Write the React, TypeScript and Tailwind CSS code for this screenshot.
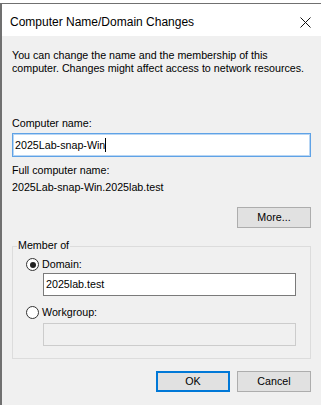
import React from 'react';

const Radio = ({ checked, label }: { checked?: boolean; label: string }) => (
  <div className="flex items-center h-[13px] gap-[3px]">
    <div className="w-[13px] h-[13px] rounded-full border border-[#333] bg-white flex items-center justify-center">
      {checked && <div className="w-[6px] h-[6px] rounded-full bg-[#222]" />}
    </div>
    <span className="leading-[13px]">{label}</span>
  </div>
);

const Button = ({ children, primary }: { children: React.ReactNode; primary?: boolean }) => (
  <div
    className={
      'w-[74px] h-[21px] flex items-center justify-center bg-[#e1e1e1] ' +
      (primary ? 'border-2 border-[#0078d7]' : 'border border-[#adadad]')
    }
  >
    {children}
  </div>
);

export default function App() {
  return (
    <div
      className="w-[321px] h-[405px] bg-white pt-[3px] text-[10.7px] text-black overflow-hidden whitespace-nowrap"
      style={{ fontFamily: '"Liberation Sans", Arial, sans-serif' }}
    >
      <div className="h-[402px] border-t border-l-2 border-[#707070] flex flex-col">
        {/* Title bar */}
        <div className="h-[32px] shrink-0 bg-white flex items-center justify-between pl-[8px] pr-[10px] pt-[3px]">
          <span className="text-[12px]">Computer Name/Domain Changes</span>
          <svg width="11" height="11" viewBox="0 0 11 11" className="mt-[1px]">
            <path d="M0.5 0.5 L10.5 10.5 M10.5 0.5 L0.5 10.5" stroke="#111" strokeWidth="1" />
          </svg>
        </div>

        {/* Body */}
        <div className="flex-1 bg-[#f0f0f0] px-[10px] flex flex-col">
          <p className="mt-[13px] leading-[13px]">
            You can change the name and the membership of this
            <br />
            computer. Changes might affect access to network resources.
          </p>

          <div className="mt-[42px] leading-[13px]">Computer name:</div>
          <div className="mt-[3px] h-[24px] bg-white border border-[#5fa2e6] shadow-[inset_0_0_0_1px_#b8d6f4] flex items-center pl-[2px]">
            <span>2025Lab-snap-Win</span>
            <span className="w-px h-[14px] bg-black" />
          </div>

          <div className="mt-[7px] leading-[13px]">Full computer name:</div>
          <div className="mt-[4px] leading-[13px]">2025Lab-snap-Win.2025lab.test</div>

          <div className="mt-[13px] self-end">
            <Button>More...</Button>
          </div>

          {/* Member of group */}
          <div className="mt-[18px] h-[113px] relative border border-[#dcdcdc] flex flex-col">
            <span className="absolute -top-[8px] left-[4px] px-[1px] bg-[#f0f0f0] leading-[13px]">
              Member of
            </span>
            <div className="mt-[11px] ml-[13px]">
              <Radio checked label="Domain:" />
            </div>
            <div className="mt-[2px] ml-[30px] mr-[14px] h-[23px] bg-white border border-[#7a7a7a] flex items-center pl-[2px]">
              2025lab.test
            </div>
            <div className="mt-[10px] ml-[13px]">
              <Radio label="Workgroup:" />
            </div>
            <div className="mt-[4px] ml-[30px] mr-[14px] h-[23px] bg-[#f0f0f0] border border-[#cccccc]" />
          </div>

          <div className="mt-[12px] flex justify-end gap-[7px]">
            <Button primary>OK</Button>
            <Button>Cancel</Button>
          </div>
        </div>
      </div>
    </div>
  );
}
